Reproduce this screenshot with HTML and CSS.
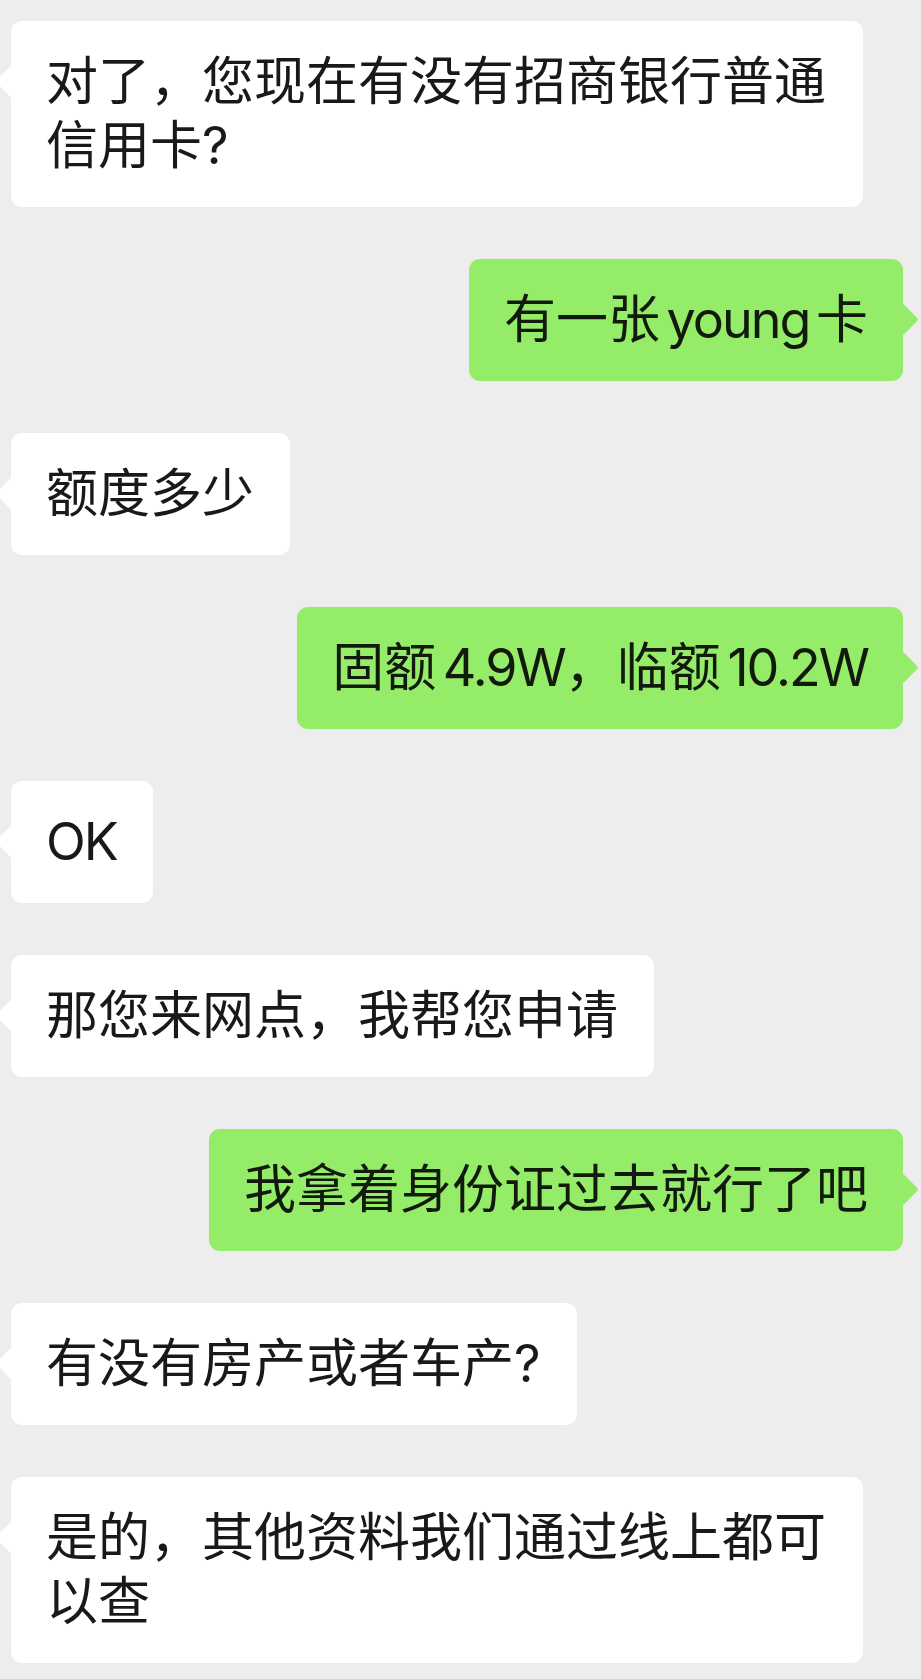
FILE: index.html
```html
<!DOCTYPE html>
<html lang="zh-CN">
<head>
<meta charset="UTF-8">
<meta name="viewport" content="width=device-width, initial-scale=1.0">
<title>聊天记录</title>
<link rel="stylesheet" href="styles.css">
</head>
<body>
  <div class="chat">
    <div class="msg msg-left">
      <div class="bubble">对了，您现在有没有招商银行普通信用卡?</div>
    </div>
    <div class="msg msg-right">
      <div class="bubble">有一张 <span class="en">young</span> 卡</div>
    </div>
    <div class="msg msg-left">
      <div class="bubble">额度多少</div>
    </div>
    <div class="msg msg-right">
      <div class="bubble">固额 <span class="en">4.9W</span>，临额 <span class="en">10.2W</span></div>
    </div>
    <div class="msg msg-left">
      <div class="bubble"><span class="en">OK</span></div>
    </div>
    <div class="msg msg-left">
      <div class="bubble">那您来网点，我帮您申请</div>
    </div>
    <div class="msg msg-right">
      <div class="bubble">我拿着身份证过去就行了吧</div>
    </div>
    <div class="msg msg-left">
      <div class="bubble">有没有房产或者车产?</div>
    </div>
    <div class="msg msg-left">
      <div class="bubble">是的，其他资料我们通过线上都可以查</div>
    </div>
  </div>
</body>
</html>
```

FILE: styles.css
```css
body {
  margin: 0;
  background: #ededed;
  font-family: Inter, "Noto Sans CJK SC", sans-serif;
  color: #191919;
  overflow: hidden;
}
.chat {
  display: flex;
  flex-direction: column;
  gap: 52px;
  padding: 21px 18px 0 11px;
}
.msg {
  display: flex;
}
.msg-left {
  justify-content: flex-start;
}
.msg-right {
  justify-content: flex-end;
}
.bubble {
  position: relative;
  max-width: 852px;
  box-sizing: border-box;
  padding: 29px 36px 29px 35px;
  border-radius: 11px;
  font-size: 52px;
  line-height: 64px;
  word-spacing: -8px;
  background: #ffffff;
}
.en {
  letter-spacing: -2px;
}
.bubble::before {
  content: "";
  position: absolute;
  top: 49px;
  width: 23px;
  height: 23px;
  border-radius: 3px;
  background: inherit;
  transform: rotate(45deg);
}
.msg-left .bubble::before {
  left: -11px;
}
.msg-right .bubble {
  background: #95ec69;
  color: #111a0c;
  padding: 29px 35px 29px 35px;
}
.msg-right .bubble::before {
  right: -11px;
}
```
